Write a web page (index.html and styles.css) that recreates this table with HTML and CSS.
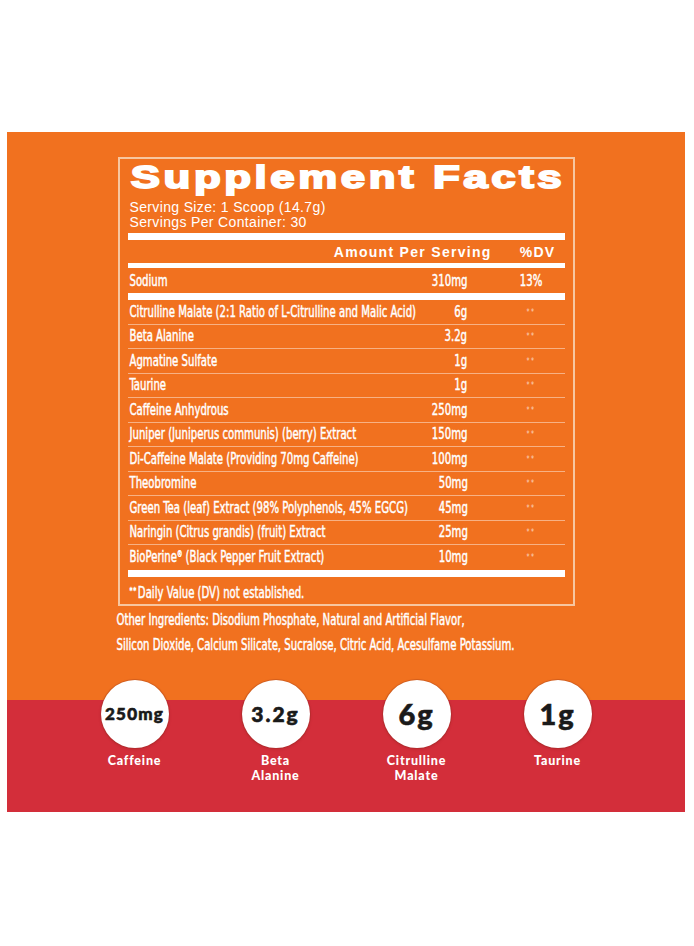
FILE: index.html
```html
<!DOCTYPE html>
<html lang="en">
<head>
<meta charset="utf-8">
<title>Supplement Facts</title>
<link rel="stylesheet" href="styles.css">
</head>
<body>
<div class="panel">
  <div class="top">
    <div class="facts">
      <div class="title">Supplement Facts</div>
      <div class="serving">
        <div>Serving Size: 1 Scoop (14.7g)</div>
        <div>Servings Per Container: 30</div>
      </div>
      <div class="bar bar-thick"></div>
      <div class="head"><span>Amount Per Serving</span><span>%DV</span></div>
      <div class="bar bar-mid"></div>
      <div class="row row-sodium"><span class="n">Sodium</span><span class="a">310mg</span><span class="d pct">13%</span></div>
      <div class="bar bar-thick"></div>
      <div class="rows">
        <div class="row"><span class="n">Citrulline Malate (2:1 Ratio of L-Citrulline and Malic Acid)</span><span class="a">6g</span><span class="d">**</span></div>
        <div class="row"><span class="n">Beta Alanine</span><span class="a">3.2g</span><span class="d">**</span></div>
        <div class="row"><span class="n">Agmatine Sulfate</span><span class="a">1g</span><span class="d">**</span></div>
        <div class="row"><span class="n">Taurine</span><span class="a">1g</span><span class="d">**</span></div>
        <div class="row"><span class="n">Caffeine Anhydrous</span><span class="a">250mg</span><span class="d">**</span></div>
        <div class="row"><span class="n">Juniper (Juniperus communis) (berry) Extract</span><span class="a">150mg</span><span class="d">**</span></div>
        <div class="row"><span class="n">Di-Caffeine Malate (Providing 70mg Caffeine)</span><span class="a">100mg</span><span class="d">**</span></div>
        <div class="row"><span class="n">Theobromine</span><span class="a">50mg</span><span class="d">**</span></div>
        <div class="row"><span class="n">Green Tea (leaf) Extract (98% Polyphenols, 45% EGCG)</span><span class="a">45mg</span><span class="d">**</span></div>
        <div class="row"><span class="n">Naringin (Citrus grandis) (fruit) Extract</span><span class="a">25mg</span><span class="d">**</span></div>
        <div class="row"><span class="n">BioPerine<sup>®</sup> (Black Pepper Fruit Extract)</span><span class="a">10mg</span><span class="d">**</span></div>
      </div>
      <div class="bar bar-thick"></div>
      <div class="foot"><span class="n"><span class="stars">**</span>Daily Value (DV) not established.</span></div>
    </div>
    <div class="other">
      <div><span class="n">Other Ingredients: Disodium Phosphate, Natural and Artificial Flavor,</span></div>
      <div><span class="n">Silicon Dioxide, Calcium Silicate, Sucralose, Citric Acid, Acesulfame Potassium.</span></div>
    </div>
  </div>
  <div class="stats">
    <div class="stat">
      <div class="circle"><span class="v v-250">250mg</span></div>
      <div class="label">Caffeine</div>
    </div>
    <div class="stat">
      <div class="circle"><span class="v v-32">3.2g</span></div>
      <div class="label">Beta<br>Alanine</div>
    </div>
    <div class="stat">
      <div class="circle"><span class="v v-big">6g</span></div>
      <div class="label">Citrulline<br>Malate</div>
    </div>
    <div class="stat">
      <div class="circle"><span class="v v-big">1g</span></div>
      <div class="label">Taurine</div>
    </div>
  </div>
</div>
</body>
</html>
```

FILE: styles.css
```css
html, body {
  margin: 0;
  padding: 0;
  background: #ffffff;
}

.panel {
  margin: 132px 0 0 7px;
  width: 678px;
  background: #f1711f;
  color: #ffffff;
}

.top {
  padding: 25px 0 41.5px;
}

.facts {
  box-sizing: border-box;
  width: 457px;
  margin: 0 auto;
  border: 2px solid #f7c6a0;
  padding: 0 8px;
}

.title {
  font-family: "Liberation Sans", Arial, sans-serif;
  font-weight: 700;
  font-size: 32px;
  line-height: 32px;
  letter-spacing: 2.6px;
  padding: 2px 0 0 2px;
  white-space: nowrap;
  -webkit-text-stroke: 1.8px #ffffff;
  transform: scaleX(1.37);
  transform-origin: left center;
  margin-bottom: 7px;
}

.serving {
  font-family: "Liberation Sans", Arial, sans-serif;
  font-size: 14px;
  line-height: 14.5px;
  letter-spacing: 0.35px;
  padding-left: 2px;
}

.bar {
  background: #ffffff;
}

.bar-thick {
  height: 7px;
  margin-top: 4px;
}

.rows + .bar-thick,
.row-sodium + .bar-thick {
  margin-top: 0;
}

.bar-mid {
  height: 5px;
}

.head {
  display: flex;
  justify-content: flex-end;
  gap: 28px;
  padding: 2px 9px 0 0;
  font-family: "Liberation Sans", Arial, sans-serif;
  font-weight: 700;
  font-size: 14px;
  line-height: 21px;
  letter-spacing: 1.3px;
}

.row {
  display: grid;
  grid-template-columns: minmax(0, 1fr) 80px 97px;
  align-items: center;
  box-sizing: border-box;
  height: 24.5px;
  border-bottom: 1px solid rgba(255, 255, 255, 0.45);
  font-family: "DejaVu Sans Condensed", "DejaVu Sans", sans-serif;
  font-stretch: condensed;
  font-size: 15px;
  line-height: 20px;
  white-space: nowrap;
}

.rows .row:last-child {
  border-bottom: none;
}

.row-sodium {
  height: 25px;
  border-bottom: none;
}

.n, .a, .d {
  display: inline-block;
  transform: scaleX(0.75);
  -webkit-text-stroke: 0.45px #ffffff;
}

.n {
  transform-origin: left center;
  padding-left: 2px;
}

.a {
  justify-self: end;
  transform-origin: right center;
}

.d {
  justify-self: center;
  margin-left: 30px;
  transform-origin: center center;
  font-size: 9px;
  letter-spacing: 2px;
  color: rgba(255, 255, 255, 0.7);
  -webkit-text-stroke: 0;
}

.d.pct {
  font-size: 15px;
  letter-spacing: 0;
  color: #ffffff;
  -webkit-text-stroke: 0.45px #ffffff;
}

sup {
  font-size: 8px;
  line-height: 0;
  vertical-align: 5px;
}

.foot {
  height: 27px;
  padding-top: 2px;
  box-sizing: border-box;
  font-family: "DejaVu Sans Condensed", "DejaVu Sans", sans-serif;
  font-stretch: condensed;
  font-size: 15px;
  line-height: 25px;
  white-space: nowrap;
}

.stars {
  font-size: 9px;
  vertical-align: 4px;
  letter-spacing: 1px;
  margin-right: 1px;
}

.other {
  margin: 2.5px 0 0 108px;
  font-family: "DejaVu Sans Condensed", "DejaVu Sans", sans-serif;
  font-stretch: condensed;
  font-size: 15px;
  line-height: 25px;
  white-space: nowrap;
}

.stats {
  background: #d32e3a;
  height: 112px;
  display: flex;
  justify-content: center;
}

.stat {
  width: 141px;
  margin-top: -20px;
  display: flex;
  flex-direction: column;
  align-items: center;
}

.circle {
  width: 68px;
  height: 68px;
  border-radius: 50%;
  background: #ffffff;
  box-shadow: 0 0 0 1px rgba(140, 50, 30, 0.25), 0 1px 3px rgba(90, 20, 10, 0.25);
  display: flex;
  align-items: center;
  justify-content: center;
}

.v {
  font-family: Lato, "Open Sans", sans-serif;
  font-weight: 900;
  color: #1a1a1a;
  -webkit-text-stroke: 0.6px #1a1a1a;
  white-space: nowrap;
}

.v-250 {
  font-size: 17px;
  letter-spacing: 1.2px;
}

.v-32 {
  font-size: 21px;
  letter-spacing: 2px;
}

.v-big {
  font-size: 29px;
  letter-spacing: 2px;
}

.label {
  margin-top: 5px;
  font-family: Lato, "Open Sans", sans-serif;
  font-weight: 900;
  font-size: 12.5px;
  line-height: 15px;
  letter-spacing: 0.8px;
  text-align: center;
  color: #ffffff;
}
```
